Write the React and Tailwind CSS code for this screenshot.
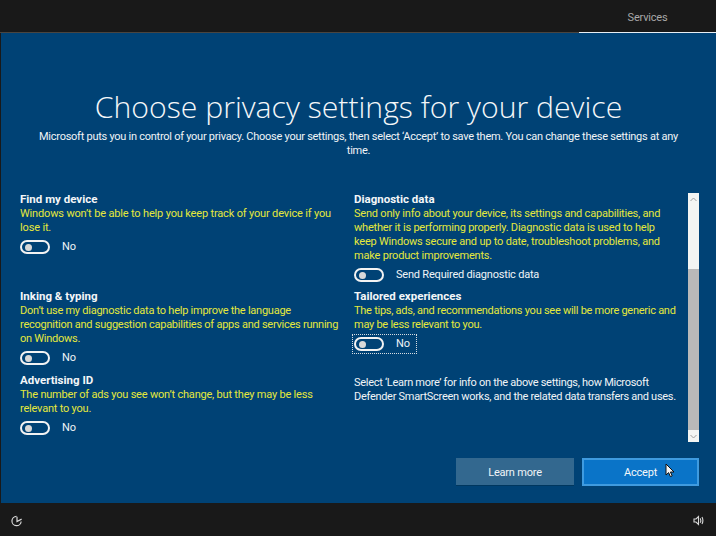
import React from 'react';

function Lines({ lines }) {
  return lines.map((line) => (
    <span key={line} className="block whitespace-nowrap">{line}</span>
  ));
}

function Toggle({ label, focused }) {
  return (
    <div className="relative flex items-center h-[14px]">
      <span className="w-[30px] h-[14px] rounded-full border-2 border-[#f2f2f2] flex items-center pl-[3px] shrink-0">
        <span className="w-[7px] h-[7px] rounded-full bg-[#d8d8d8]" />
      </span>
      <span className="ml-[12px] text-[#f0f4f7] whitespace-nowrap">{label}</span>
      {focused && <span className="absolute -left-[2px] -top-[3px] w-[65px] h-[20px] border border-dotted border-[#d8dde2]" />}
    </div>
  );
}

function Setting({ title, lines, toggle, focused, tracking = '', className = '' }) {
  return (
    <section className={className}>
      <h2 className="font-bold text-[#f4f6f8] text-[11.5px] tracking-normal leading-[13px] mb-px">{title}</h2>
      <p className={`text-[#e4e83c] ${tracking}`}><Lines lines={lines} /></p>
      <div className="mt-[5px]">
        <Toggle label={toggle} focused={focused} />
      </div>
    </section>
  );
}

export default function App() {
  return (
    <div className="w-[716px] h-[536px] bg-[#191919] flex flex-col overflow-hidden font-['Roboto',sans-serif] text-[11px] tracking-[-0.2px] leading-[14px]">
      {/* top bar */}
      <header className="h-[33px] flex justify-end shrink-0 border-b border-[#4a4540]">
        <div className="w-[137px] h-[34px] border-b-2 border-[#e8eef4] text-center text-[#a8a8a8] leading-[36px]">Services</div>
      </header>

      <main className="ml-px h-[470px] bg-[#004275] flex flex-col pl-[19px] pr-[17px] relative">
        <h1 className="mt-[55px] text-center text-[#f4f7f9] font-['Open_Sans',sans-serif] font-light text-[30.2px] tracking-normal leading-[38px] whitespace-nowrap -ml-[2px]">Choose privacy settings for your device</h1>
        <p className="mt-[4px] text-center text-[#f0f4f7] tracking-[-0.26px] -translate-x-[1px]">
          <Lines lines={['Microsoft puts you in control of your privacy. Choose your settings, then select ‘Accept’ to save them. You can change these settings at any', 'time.']} />
        </p>

        <div className="mt-[35px] flex h-[249px]">
          <div className="w-[334px] pr-[14px]">
            <Setting title="Find my device" tracking="tracking-[-0.16px]" lines={['Windows won’t be able to help you keep track of your device if you', 'lose it.']} toggle="No" />
            <Setting className="mt-[36px]" tracking="tracking-[-0.25px]" title="Inking & typing" lines={['Don’t use my diagnostic data to help improve the language', 'recognition and suggestion capabilities of apps and services running', 'on Windows.']} toggle="No" />
            <Setting className="mt-[9px]" title="Advertising ID" lines={['The number of ads you see won’t change, but they may be less', 'relevant to you.']} toggle="No" />
          </div>
          <div className="flex-1">
            <Setting title="Diagnostic data" lines={['Send only info about your device, its settings and capabilities, and', 'whether it is performing properly. Diagnostic data is used to help', 'keep Windows secure and up to date, troubleshoot problems, and', 'make product improvements.']} toggle="Send Required diagnostic data" />
            <Setting className="mt-[8px]" tracking="tracking-[-0.26px]" title="Tailored experiences" lines={['The tips, ads, and recommendations you see will be more generic and', 'may be less relevant to you.']} toggle="No" focused />
            <p className="mt-[25px] text-[#f0f4f7] tracking-[-0.29px]"><Lines lines={['Select ‘Learn more’ for info on the above settings, how Microsoft', 'Defender SmartScreen works, and the related data transfers and uses.']} /></p>
          </div>
          {/* scrollbar */}
          <div className="w-[11px] shrink-0 bg-[#f3f5f3] flex flex-col">
            <div className="h-[12px] flex items-center justify-center shrink-0">
              <svg width="7" height="5" viewBox="0 0 7 5"><path d="M0.5 4 L3.5 1 L6.5 4" fill="none" stroke="#a0a0a0" /></svg>
            </div>
            <div className="mt-[64px] h-[161px] bg-[#b9b9b9]" />
            <div className="flex-1 flex items-center justify-center">
              <svg width="7" height="5" viewBox="0 0 7 5"><path d="M0.5 1 L3.5 4 L6.5 1" fill="none" stroke="#a0a0a0" /></svg>
            </div>
          </div>
        </div>

        <div className="mt-[16px] flex justify-end gap-[8px]">
          <button className="w-[118px] h-[28px] pt-[2px] bg-[#33688f] text-[#f0f4f7] border-b border-[#00375f]">Learn more</button>
          <button className="w-[117px] h-[28px] pt-px bg-[#0a74c8] text-[#f4f7f9] border-2 border-[#3f9be0]">Accept</button>
        </div>

        {/* mouse pointer */}
        <svg className="absolute left-[664px] top-[430px]" width="11" height="15" viewBox="0 0 11 15">
          <path d="M1 1 L1 12 L3.6 9.6 L5.4 13.6 L7.2 12.8 L5.4 9 L9 9 Z" fill="#f4f4f4" stroke="#111" strokeWidth="1" />
        </svg>
      </main>

      {/* bottom bar */}
      <footer className="flex-1 flex items-center justify-between pl-[11px] pr-[12px]">
        <svg className="mt-[2px]" width="12" height="12" viewBox="0 0 13 13" fill="none" stroke="#d8d8d8" strokeWidth="1.3">
          <path d="M6 1.5 A5 5 0 1 0 11 7" />
          <path d="M6.5 2 L6.5 7 L11.5 4.5" />
        </svg>
        <svg className="mt-[2px]" width="11" height="11" viewBox="0 0 11 11" fill="none" stroke="#d8d8d8" strokeWidth="1.1">
          <path d="M1 4 H3 L5.5 1.5 V9.5 L3 7 H1 Z" />
          <path d="M7.2 3.2 Q8.4 5.5 7.2 7.8" />
          <path d="M9 2 Q10.8 5.5 9 9" />
        </svg>
      </footer>
    </div>
  );
}
